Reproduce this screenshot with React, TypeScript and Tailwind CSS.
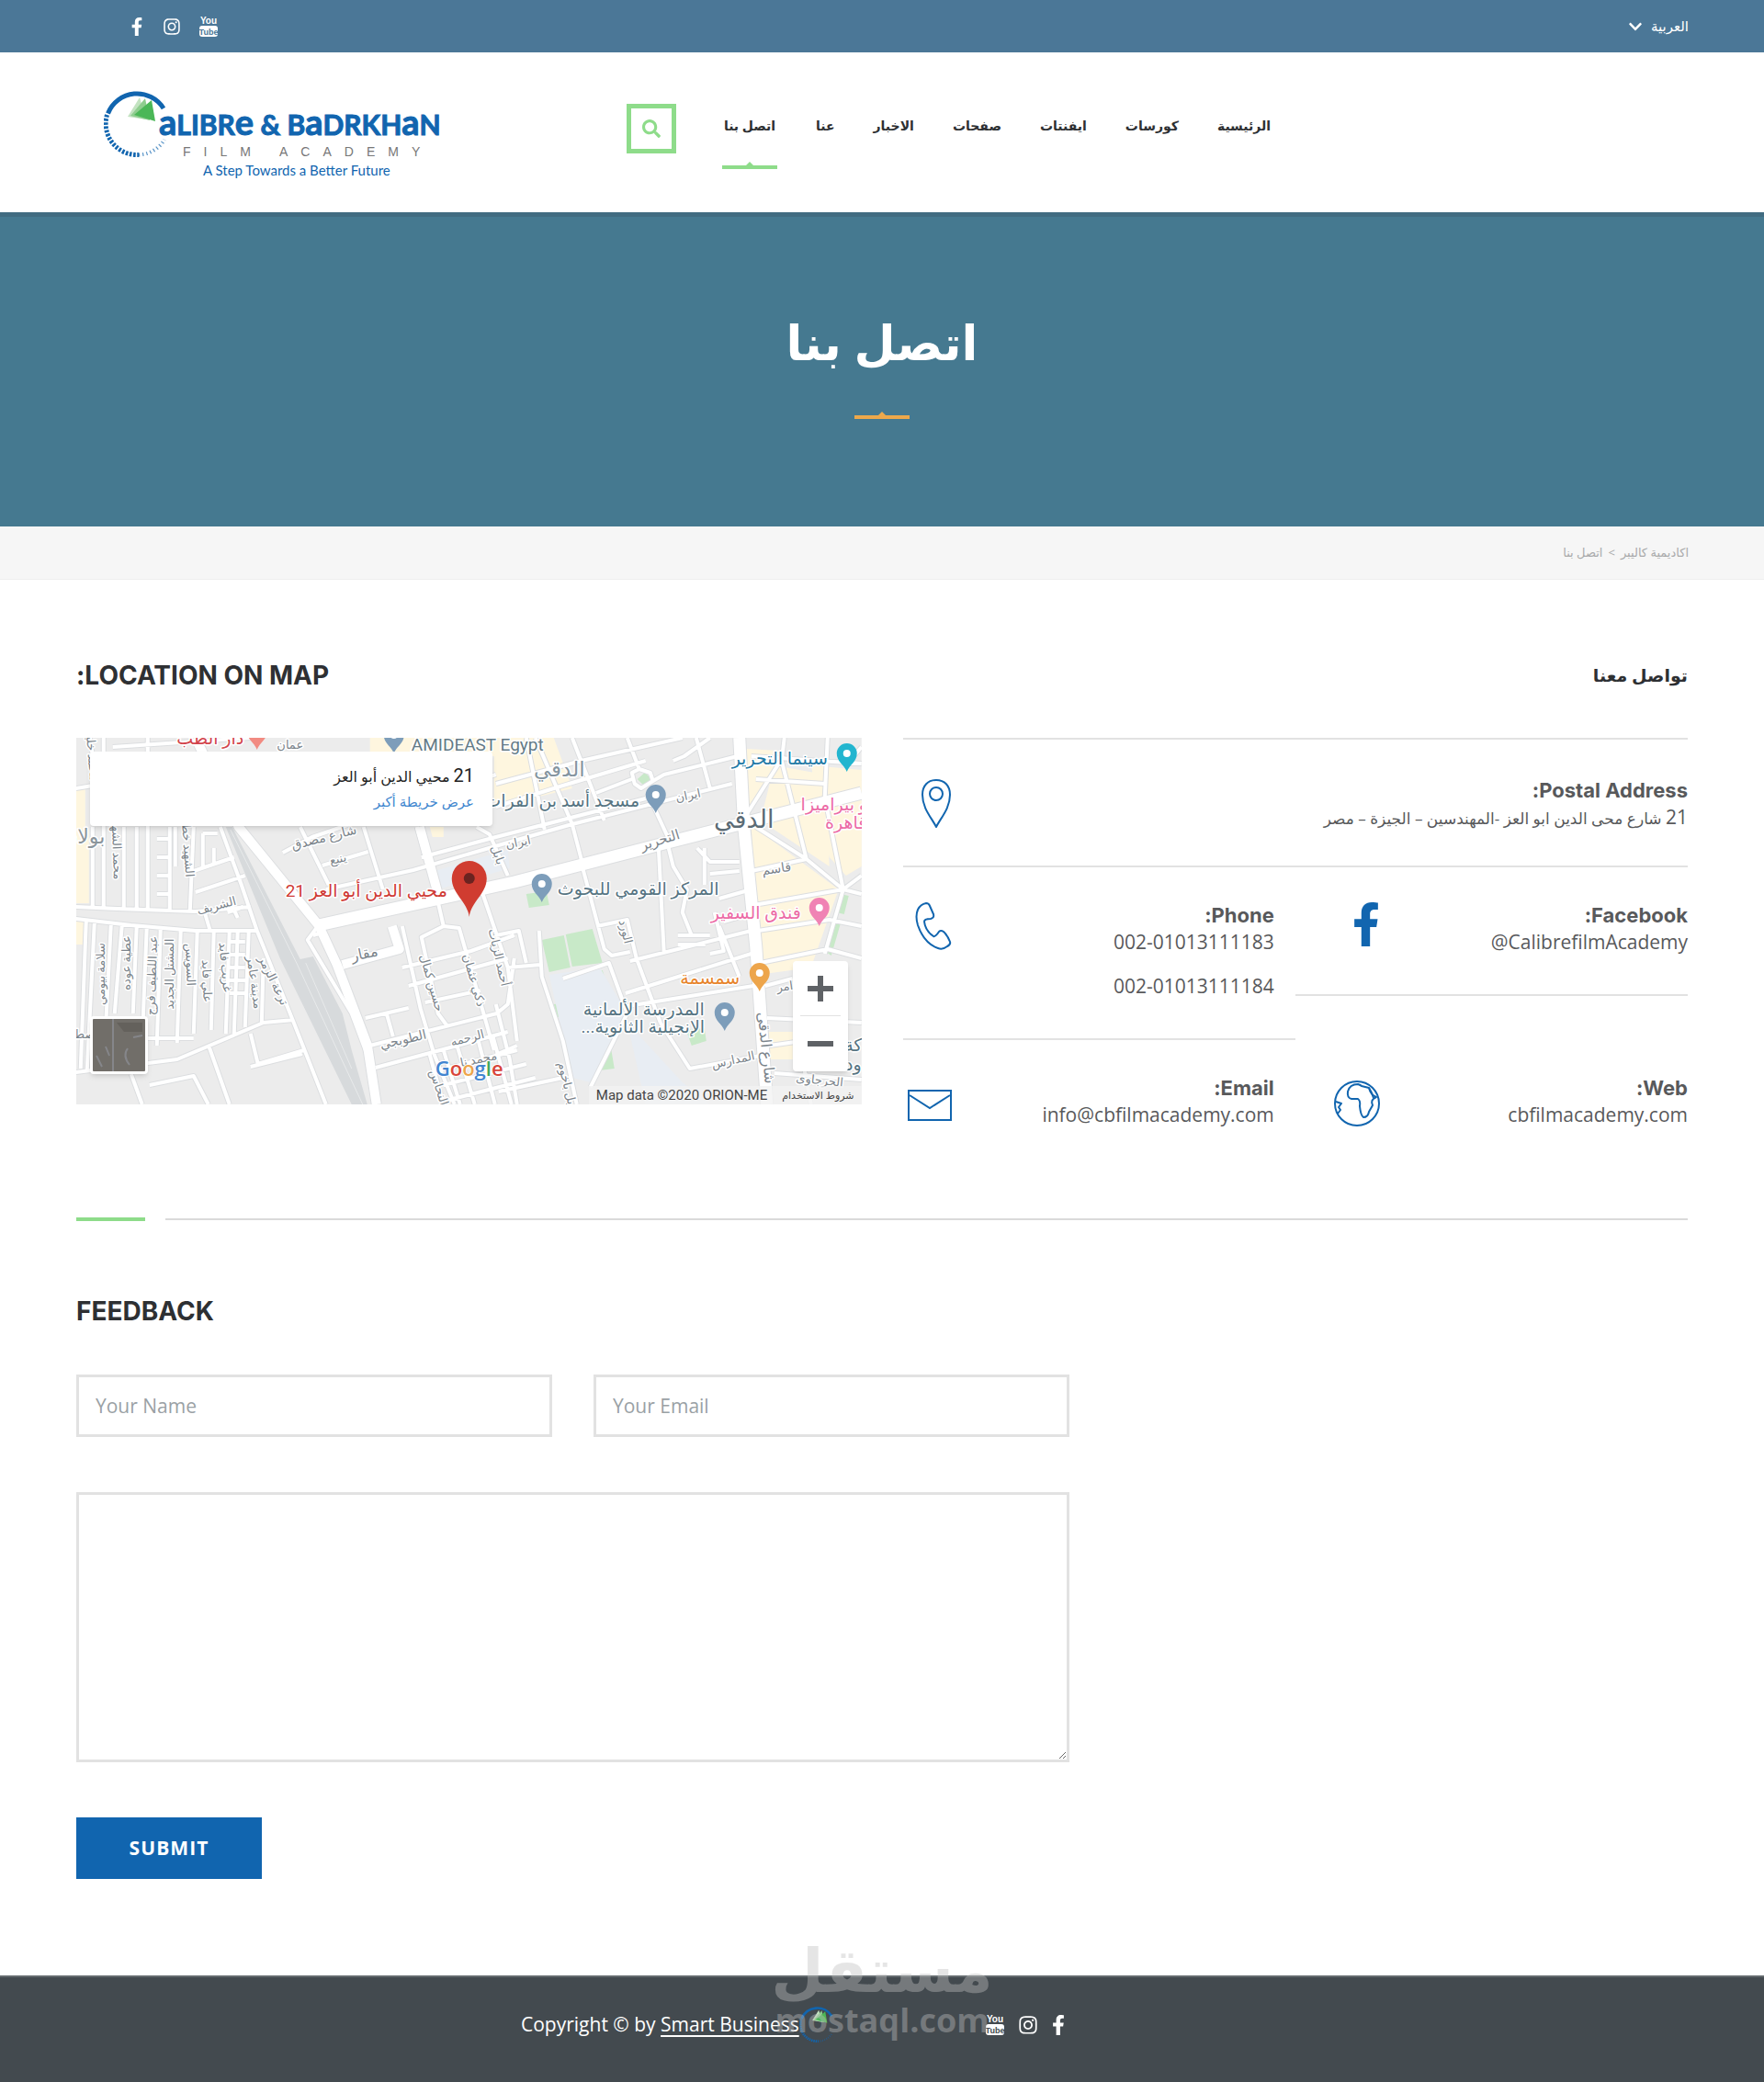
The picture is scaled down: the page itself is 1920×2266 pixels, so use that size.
import { useState } from 'react';
import type { ReactNode } from 'react';
import { FaChevronDown, FaFacebookF, FaInstagram, FaSearch } from 'react-icons/fa';

const NAV_ITEMS = ['اتصل بنا', 'عنا', 'الاخبار', 'صفحات', 'ايفنتات', 'كورسات', 'الرئيسية'];

const BLUE = '#1165af';

function YoutubeIcon({ cut }: { cut: string }) {
    return (
        <svg width="20" height="22" viewBox="0 0 20 22" aria-hidden="true" className="font-['Liberation_Sans_Narrow','Liberation_Sans',sans-serif] font-bold">
            <text x="10" y="8" fontSize="10" textAnchor="middle" fill="#fff">You</text>
            <rect x="0" y="10" width="20" height="12" rx="3" fill="#fff" />
            <text x="10" y="20" fontSize="9" textAnchor="middle" fill={cut}>Tube</text>
        </svg>
    );
}

function Aperture() {
    return (
        <g>
            <path d="M4.5 25.5 A34 34 0 0 1 65 20" fill="none" stroke={BLUE} strokeWidth="5" />
            <path d="M3.5 27 A34 34 0 0 0 38 70.5" fill="none" stroke={BLUE} strokeWidth="5" strokeDasharray="2.6 1.6" />
            <path d="M38 70.5 A34 34 0 0 0 66 54" fill="none" stroke={BLUE} strokeWidth="4" strokeDasharray="1.2 3" opacity="0.7" />
            <path d="M26 29 L39 8 L46 32 Z" fill="#c3e3c1" />
            <path d="M29 28 L45 9 L50 33 Z" fill="#8fcd8f" />
            <path d="M33 27 L52 11 L56 34 Z" fill="#4bb757" />
        </g>
    );
}

function Logo() {
    return (
        <svg width="366" height="98" viewBox="0 0 366 98" role="img" aria-label="Calibre & Badrkhan Film Academy">
            <Aperture />
            <g fill={BLUE} stroke={BLUE} className="font-['Lato',sans-serif] font-bold">
                <text x="60" y="49" fontSize="30">
                    <tspan fontSize="38">a</tspan>LIBR<tspan fontSize="38">e</tspan> &amp; B<tspan fontSize="38">a</tspan>DRKH<tspan fontSize="38">a</tspan>N
                </text>
            </g>
            <text x="86" y="72" fontSize="14" letterSpacing="14" fill="#777" className="font-['Liberation_Sans',sans-serif]">FILM ACADEMY</text>
            <text x="108" y="93" fontSize="15" fill={BLUE} className="font-['Lato',sans-serif]">A Step Towards a Better Future</text>
        </svg>
    );
}

function Ridge({ color, className }: { color: string; className: string }) {
    return (
        <svg viewBox="0 0 60 8" width="60" height="8" className={className} aria-hidden="true">
            <path d="M0 4 H26 L30 0 L34 4 H60 V8 H0 Z" fill={color} />
        </svg>
    );
}

function TopBar() {
    return (
        <div className="flex h-[57px] items-center justify-between bg-[#4b7797] pl-[141px] pr-[82px] text-white">
            <div className="flex items-center gap-5">
                <a href="#facebook" aria-label="Facebook"><FaFacebookF className="h-5 w-4" /></a>
                <a href="#instagram" aria-label="Instagram"><FaInstagram className="h-5 w-5" /></a>
                <a href="#youtube" aria-label="YouTube"><YoutubeIcon cut="#4b7797" /></a>
            </div>
            <button type="button" className="flex items-center gap-2 text-[15px]">
                <FaChevronDown className="h-4 w-[18px]" />
                <span dir="rtl">العربية</span>
            </button>
        </div>
    );
}

function Header() {
    return (
        <header className="flex h-[174px] items-start bg-white pl-[113px]">
            <a href="#home" className="mt-[41px]"><Logo /></a>
            <button type="button" aria-label="Search" className="ml-[203px] mt-14 flex h-[54px] w-[54px] items-center justify-center border-[5px] border-[#8edc8a] text-[#8edc8a]">
                <FaSearch className="h-5 w-5" />
            </button>
            <nav className="ml-[50px] mt-16 flex gap-[42px] text-[14px] font-bold leading-8 text-[#2e3033]">
                {NAV_ITEMS.map((item, i) => (
                    <a key={item} href={`#${item}`} dir="rtl" className="flex flex-col items-center whitespace-nowrap">
                        {item}
                        {i === 0 && <Ridge color="#8edc8a" className="mt-[23px]" />}
                    </a>
                ))}
            </nav>
        </header>
    );
}

type MapLabel = { t: string; x: number; y: number; r?: number; s?: number; c?: string };

const STREET_LABELS: MapLabel[] = [
    { t: 'عمان', x: 233, y: 12 },
    { t: 'محمد خليل', x: 13, y: 18, r: 85 },
    { t: 'محمد الشهيد', x: 40, y: 120, r: 88 },
    { t: 'الشهيد خطاب', x: 117, y: 115, r: 86 },
    { t: 'شارع مصدق', x: 271, y: 113, r: -14, s: 14 },
    { t: 'ينبع', x: 286, y: 136, r: -12 },
    { t: 'بابل', x: 455, y: 129, r: 70 },
    { t: 'الشريف', x: 154, y: 187, r: -15 },
    { t: 'مقار', x: 315, y: 240, r: -12, s: 16 },
    { t: 'سلامة بيومي', x: 31, y: 257, r: -90 },
    { t: 'عطية عوده', x: 59, y: 245, r: -90 },
    { t: 'عبد اللطيف فرج', x: 87, y: 259, r: -88 },
    { t: 'المشتل الجديد', x: 106, y: 257, r: -90 },
    { t: 'السويس', x: 120, y: 247, r: 88 },
    { t: 'علي فايد', x: 138, y: 265, r: 88 },
    { t: 'غريب فايد', x: 158, y: 250, r: 85 },
    { t: 'مدينة عامر', x: 190, y: 267, r: 82 },
    { t: 'ترعة الزمر', x: 211, y: 266, r: 64 },
    { t: 'حسين كمال', x: 383, y: 268, r: 74 },
    { t: 'ذكي عثمان', x: 429, y: 265, r: 74 },
    { t: 'أحمد الزيات', x: 456, y: 240, r: 77 },
    { t: 'الطوبجي', x: 357, y: 333, r: -13, s: 14 },
    { t: 'الرحمه', x: 427, y: 331, r: -14 },
    { t: 'محمد نا', x: 439, y: 354, r: -12 },
    { t: 'النحاس', x: 391, y: 382, r: 72 },
    { t: 'صط', x: 9, y: 327 },
    { t: 'ايران', x: 667, y: 67, r: -12 },
    { t: 'ايران', x: 482, y: 118, r: -12 },
    { t: 'التحرير', x: 637, y: 116, r: -17, s: 15 },
    { t: 'قاسم', x: 763, y: 147, r: -8, s: 14 },
    { t: 'الورد', x: 594, y: 212, r: 76 },
    { t: 'امر', x: 772, y: 275, r: -8 },
    { t: 'شارع الدقى', x: 746, y: 338, r: 84, s: 16 },
    { t: 'المدارس', x: 716, y: 355, r: -12 },
    { t: 'الحرجاوى', x: 809, y: 377, r: 6 },
    { t: 'بل باخوم', x: 530, y: 377, r: 76 },
];

const PLACE_LABELS: MapLabel[] = [
    { t: 'بولاق', x: 8, y: 115, s: 22, c: '#8b959c' },
    { t: 'دار الطب', x: 146, y: 7, c: '#d2444c' },
    { t: 'AMIDEAST Egypt', x: 437, y: 14, s: 19, c: '#637a86' },
    { t: 'الدقي', x: 526, y: 42, s: 23, c: '#8595a0' },
    { t: 'الدقي', x: 727, y: 98, s: 27, c: '#5b6b75' },
    { t: 'مسجد أسد بن الفرات', x: 529, y: 75, c: '#567482' },
    { t: 'المركز القومي للبحوث', x: 612, y: 171, c: '#567482' },
    { t: 'سينما التحرير', x: 766, y: 29, c: '#2279a5' },
    { t: 'نو بيراميزا', x: 828, y: 79, c: '#ec6ba6' },
    { t: 'قاهرة', x: 838, y: 99, c: '#ec6ba6' },
    { t: 'فندق السفير', x: 740, y: 197, c: '#ec6ba6' },
    { t: 'سمسمة', x: 690, y: 268, c: '#e7842b' },
    { t: 'المدرسة الألمانية', x: 618, y: 302, c: '#567482' },
    { t: 'الإنجيلية الثانوية...', x: 617, y: 321, c: '#567482' },
    { t: 'محيي الدين أبو العز 21', x: 316, y: 173, c: '#cf3a35' },
    { t: 'كة', x: 846, y: 341, c: '#567482' },
    { t: 'ود', x: 846, y: 362, c: '#567482' },
];

const PINS = [
    { x: 197, y: -6, c: '#f28b82' },
    { x: 346, y: -2, c: '#7d9dba' },
    { x: 631, y: 63, c: '#7d9dba' },
    { x: 507, y: 160, c: '#7d9dba' },
    { x: 706, y: 300, c: '#7d9dba' },
    { x: 839, y: 18, c: '#22b5cf' },
    { x: 809, y: 186, c: '#f083b4' },
    { x: 744, y: 257, c: '#eda54b' },
];

// minor streets as "d" strings, drawn once wide in grey and once in white
const SMALL_ROADS =
    'M0 184 L45 186 L130 189 L190 184 M0 197 L60 204 L130 210 L197 210 ' +
    'M18 97 L18 186 M30 0 V186 M52 97 V186 M66 97 V187 M78 0 V187 M102 97 V188 M128 97 L124 189 M108 97 V140 ' +
    'M88 110 H100 M88 130 H100 M88 150 H100 M88 170 H100 M128 145 L172 130 M130 168 L184 150 M138 104 H154 M138 104 V140 M150 120 V140 ' +
    'M11 200 L5 360 M20 202 L12 362 M38 204 L30 360 M50 204 L42 300 M66 205 L62 300 M77 206 L72 330 M92 207 L88 335 M114 209 L110 332 M132 210 L128 322 M150 210 L147 318 M167 210 L163 322 M176 210 L172 322 M188 210 L184 315 M204 240 L202 312 ' +
    'M167 222 H184 M167 236 H184 M167 250 H184 M167 264 H184 M167 278 H184 M70 327 H128 ' +
    'M0 364 L110 350 L204 310 L237 307 M144 334 L167 399 M60 366 L72 399 M80 378 L128 368 L144 399 M190 322 L198 355 L248 340 M190 358 L246 344 ' +
    'M15 0 L30 94 M40 10 L190 0 M0 55 L18 52 ' +
    'M157 97 L180 160 L197 210 L237 310 L272 399 M140 190 L146 210 M165 190 L182 184 M168 178 L176 196 ' +
    'M225 125 L257 108 L457 40 M244 97 L275 160 M272 165 L367 144 L477 112 L540 94 L714 50 M313 97 L334 165 M268 139 L318 124 ' +
    'M371 97 L392 170 L400 205 M376 130 L457 108 L620 66 M436 97 L450 105 L470 150 ' +
    'M400 205 L376 217 L394 300 L405 315 M400 205 L417 207 L455 340 M355 250 L430 232 L477 215 M362 270 L470 240 M355 205 L375 295 L390 345 L412 399 ' +
    'M264 204 L252 220 L300 300 L315 340 M258 215 L268 212 M320 335 L458 300 L470 290 L477 240 M315 305 L362 294 M338 300 L345 325 M380 288 L440 275 ' +
    'M326 359 L470 320 M385 345 L400 399 M400 340 L418 399 M415 336 L434 399 M395 362 L480 340 M400 378 L490 355 M406 394 L500 370 M438 330 L456 399 M454 326 L474 399 ' +
    'M441 165 L470 250 L480 330 M470 250 L505 247 M457 215 L482 210 L490 245 M504 210 L507 260 L530 330 L545 399 M457 290 L472 350 L480 399 M457 345 L480 335 M460 385 L530 370 ' +
    'M551 140 L575 230 L583 237 L603 233 M567 205 L600 198 L610 240 L636 310 M603 243 L735 210 M530 262 L580 245 L600 300 L560 380 M598 278 L735 235 M600 292 L750 268 M636 310 L668 360 L750 345 ' +
    'M634 118 L640 235 M645 120 L650 140 L665 165 L660 190 L670 215 M676 120 L690 135 H722 M684 120 L684 160 M690 148 L722 145 M700 175 L735 165 M705 200 L740 190 M655 215 H690 M655 225 H685 M690 235 L705 232 L695 190 M700 205 L722 260 ' +
    'M650 25 L662 20 L690 0 M605 38 L613 34 L625 38 L628 47 L615 55 L608 50 Z M600 0 L613 34 M628 47 L640 40 L720 20 M566 60 L605 45 M675 0 L690 55 M457 50 L550 25 L660 0 M457 75 L520 55 L620 25 M500 0 L540 94 L552 140 M540 0 L575 90 M490 0 L510 100 M622 60 L645 110 ' +
    'M727 88 L770 20 M740 97 L795 132 L835 165 L855 150 M735 20 L855 28 M740 45 L815 50 M771 0 L768 25 L795 132 M818 0 L815 65 L835 165 M735 145 L795 132 M738 182 L835 165 L855 170 M742 210 L820 198 L855 205 M745 245 L818 230 L855 240 M835 165 L815 235 M855 10 L838 30 M750 270 L780 262 M752 305 L855 310 M755 335 L790 330 M760 365 L855 372 M785 320 L800 399';

const ROADS = 'M130 0 L177 97 L264 204 L284 247 L317 334 L327 399 M344 205 L352 230 L290 247 M374 97 L394 170';
const MAIN_ROADS = 'M264 204 L477 157 L644 114 L855 60 M722 0 L727 97 L740 227 L752 399';

function MapDrawing() {
    return (
        <svg viewBox="0 0 855 399" preserveAspectRatio="xMidYMid slice" className="block h-full w-full" aria-hidden="true">
            <rect width="855" height="399" fill="#ececec" />
            <g fill="#fef6df">
                <path d="M0 55 H10 V100 H14 V180 H0 Z M0 195 L10 198 L8 225 H0 Z" />
                <path d="M320 0 H480 L520 0 L540 55 L500 65 L490 75 L455 70 V20 L320 20 Z M385 97 H400 V108 H388 Z" />
                <path d="M730 12 L765 14 L768 30 L730 80 Z M735 95 L830 165 L800 250 L742 258 Z M800 30 L855 35 V140 L838 150 L820 130 Z M760 30 L815 40 L820 140 L790 120 L745 90 Z M740 320 H780 V350 H742 Z" />
            </g>
            <g fill="#c8e9c8">
                <path d="M507 220 L531 215 L538 250 L515 255 Z M533 214 L562 208 L573 245 L540 249 Z" />
                <path d="M619 38 L627 45 L619 53 L611 45 Z M490 170 L512 167 L515 182 L493 185 Z" />
                <path d="M832 170 L841 172 L836 192 L828 190 Z M826 198 L833 199 L822 237 L815 232 Z" />
                <path d="M545 262 L573 253 L580 275 L550 280 Z M520 290 L534 288 L536 302 L524 304 Z M563 340 L582 336 L586 360 L570 362 Z M536 355 L548 352 L555 370 L540 368 Z M618 365 L632 361 L634 370 L620 374 Z M664 318 L684 316 L686 330 L670 335 Z" />
            </g>
            <path d="M390 145 L470 122 L472 142 L394 165 Z M515 258 L570 250 L600 300 L560 375 L540 370 Z M600 310 L660 375 L690 399 H620 Z" fill="#e8edf3" />
            <path d="M163 97 L170 97 L244 241 L258 238 L290 300 L300 340 L317 399 H300 L222 240 Z" fill="#d7dadc" />
            <path d="M168 100 L240 245 L312 399 M250 245 L300 360" stroke="#e8eaeb" fill="none" />
            <g fill="none" strokeLinejoin="round">
                <path d={SMALL_ROADS} stroke="#dcdee0" strokeWidth="6" />
                <path d={ROADS} stroke="#dcdee0" strokeWidth="12" />
                <path d={MAIN_ROADS} stroke="#dcdee0" strokeWidth="15" />
                <path d={SMALL_ROADS} stroke="#fff" strokeWidth="4" />
                <path d={ROADS} stroke="#fff" strokeWidth="10" />
                <path d={MAIN_ROADS} stroke="#fff" strokeWidth="13" />
            </g>
            <g className="font-['Roboto','DejaVu_Sans',sans-serif]" textAnchor="middle" stroke="#fff" strokeWidth="3" strokeLinejoin="round" paintOrder="stroke">
                {[...STREET_LABELS, ...PLACE_LABELS].map((l, i) => (
                    <text
                        key={i}
                        x={l.x}
                        y={l.y}
                        direction="rtl"
                        fontSize={l.s ?? (i < STREET_LABELS.length ? 13 : 19)}
                        fill={l.c ?? '#7b848b'}
                        transform={`rotate(${l.r ?? 0} ${l.x} ${l.y})`}
                    >
                        {l.t}
                    </text>
                ))}
            </g>
            {PINS.map((p) => (
                <g key={`${p.x}-${p.y}`} transform={`translate(${p.x} ${p.y})`}>
                    <path d="M0 19 C-3 11 -11 8 -11 -1 A11 11 0 0 1 11 -1 C11 8 3 11 0 19 Z" fill={p.c} />
                    <circle cy="-1" r="4" fill="#fff" />
                </g>
            ))}
            <path d="M428 195 C426 178 409 170 409 153 A19 19 0 0 1 447 153 C447 170 430 178 428 195 Z" fill="#d03c30" />
            <circle cx="428" cy="153" r="6" fill="#6b2320" />
            <text x="391" y="368" fontSize="22" stroke="#fff" strokeWidth="2" paintOrder="stroke" className="font-['Open_Sans',sans-serif] font-semibold">
                <tspan fill="#4285d0">G</tspan><tspan fill="#d8453a">o</tspan><tspan fill="#eda54b">o</tspan><tspan fill="#4285d0">g</tspan><tspan fill="#43a85a">l</tspan><tspan fill="#d8453a">e</tspan>
            </text>
        </svg>
    );
}

function LocationMap() {
    return (
        <div className="relative h-[399px] overflow-hidden">
            <MapDrawing />
            <div dir="rtl" className="absolute left-[15px] top-[15px] h-[81px] w-[438px] rounded-sm bg-white px-5 pt-3 shadow-md">
                <p className="font-['Roboto','DejaVu_Sans',sans-serif] text-base leading-[26px] text-[#222]">
                    <span className="text-xl">21</span> محيي الدين أبو العز
                </p>
                <a href="#map" className="block text-[15px] leading-[26px] text-[#3f87cf]">عرض خريطة أكبر</a>
            </div>
            <button type="button" aria-label="Satellite" className="absolute left-[15px] top-[303px] h-[63px] w-[63px] rounded-sm border-[3px] border-white bg-[#716e69] shadow-md">
                <svg viewBox="0 0 57 57" className="h-full w-full" aria-hidden="true">
                    <path d="M22 0 V57 M4 40 L10 52 M14 30 L18 40 M38 32 Q32 40 40 50 M44 20 L54 18" stroke="#85868a" fill="none" strokeWidth="2" />
                    <path d="M26 4 H54 V14 H34 Z" fill="#64615c" />
                </svg>
            </button>
            <div className="absolute left-[780px] top-[243px] flex w-[60px] flex-col rounded-sm bg-white px-2 text-[#5f6266] shadow-md">
                <button type="button" aria-label="Zoom in" className="flex h-[60px] items-center justify-center border-b border-[#e2e2e2]">
                    <svg width="28" height="28" aria-hidden="true"><path d="M14 0 V28 M0 14 H28" stroke="currentColor" strokeWidth="6" /></svg>
                </button>
                <button type="button" aria-label="Zoom out" className="flex h-[60px] items-center justify-center">
                    <svg width="28" height="28" aria-hidden="true"><path d="M0 14 H28" stroke="currentColor" strokeWidth="6" /></svg>
                </button>
            </div>
            <div className="absolute bottom-0 right-0 flex h-5 items-center gap-4 bg-[#f2f2f2]/80 px-2 text-[#444]">
                <span className="font-['Roboto',sans-serif] text-[15px]">Map data ©2020 ORION-ME</span>
                <a href="#terms" dir="rtl" className="text-[11px]">شروط الاستخدام</a>
            </div>
        </div>
    );
}

function PinIcon() {
    return (
        <svg width="34" height="54" viewBox="0 0 34 54" fill="none" stroke={BLUE} strokeWidth="2" aria-hidden="true">
            <path d="M17 52 C12 42 2 32 2 17 C2 7 8 1 17 1 C26 1 32 7 32 17 C32 32 22 42 17 52 Z" strokeLinejoin="round" />
            <circle cx="17" cy="16" r="7" />
        </svg>
    );
}

function PhoneIcon() {
    return (
        <svg width="40" height="52" viewBox="0 0 40 52" fill="none" stroke={BLUE} strokeWidth="2" strokeLinejoin="round" aria-hidden="true">
            <path d="M3 8 Q6 2 12 1 Q15 1 16 4 L20 13 Q21 17 17 18 Q10 18 10 21 Q11 31 20 37 Q22 38 26 32 Q28 30 31 32 Q36 37 38 43 Q39 46 35 48 Q30 52 25 50 Q10 45 3 25 Q0 15 3 8 Z" />
        </svg>
    );
}

function MailIcon() {
    return (
        <svg width="48" height="34" viewBox="0 0 48 34" fill="none" stroke={BLUE} strokeWidth="2" aria-hidden="true">
            <rect x="1" y="1" width="46" height="32" />
            <path d="M2 6 L24 20 L46 6" />
        </svg>
    );
}

function GlobeIcon() {
    return (
        <svg width="50" height="50" viewBox="0 0 50 50" fill="none" stroke={BLUE} strokeWidth="2" strokeLinejoin="round" aria-hidden="true">
            <circle cx="25" cy="25" r="24" />
            <path d="M26 4 Q17 4 15 12 Q14 19 19 20 L26 20 Q29 22 28 28 Q29 38 32 40 Q37 40 38 34 L42 27 Q39 21 46 18 Q40 16 38 8 L30 6 Q29 5 26 4 Z" />
            <path d="M2 23 L8 25 L5 29 L7 32 L4 36 M38 8 Q41 12 43 19" />
        </svg>
    );
}

interface ContactCellProps {
    label: string;
    icon: ReactNode;
    className: string;
    children: ReactNode;
}

function ContactCell({ label, icon, className, children }: ContactCellProps) {
    return (
        <div className={`flex items-start justify-between ${className}`}>
            <div className="flex w-[53px] justify-end">{icon}</div>
            <div className="text-right leading-[29px]">
                <h3 dir="rtl" className="font-['Inter',sans-serif] text-[22px] font-bold leading-[29px]">{label}</h3>
                {children}
            </div>
        </div>
    );
}

function ContactInfo() {
    return (
        <div className="grid grid-cols-2 items-start border-t-2 border-[#e2e2e2] text-[21px] text-[#58595b]">
            <ContactCell label="Postal Address:" icon={<div className="pt-0.5"><PinIcon /></div>} className="col-span-2 border-b-2 border-[#e2e2e2] pb-[37px] pt-[41px]">
                <p dir="rtl" className="text-[17px] leading-[29px]"><span className="text-[21px]">21</span> شارع محى الدين ابو العز -المهندسين – الجيزة – مصر</p>
            </ContactCell>
            <ContactCell label="Phone:" icon={<PhoneIcon />} className="border-b-2 border-[#e2e2e2] pb-[42px] pr-[23px] pt-[38px]">
                <p>002-01013111183</p>
                <p className="mt-[19px]">002-01013111184</p>
            </ContactCell>
            <ContactCell label="Facebook:" icon={<FaFacebookF className="h-12 w-[30px] text-[#1165af]" />} className="border-b-2 border-[#e2e2e2] pb-[42px] pl-[39px] pt-[38px]">
                <p>@CalibrefilmAcademy</p>
            </ContactCell>
            <ContactCell label="Email:" icon={<div className="pt-4"><MailIcon /></div>} className="pb-[42px] pr-[23px] pt-[38px]">
                <p>info@cbfilmacademy.com</p>
            </ContactCell>
            <ContactCell label="Web:" icon={<div className="pt-1.5"><GlobeIcon /></div>} className="pb-[42px] pl-[39px] pt-[38px]">
                <p>cbfilmacademy.com</p>
            </ContactCell>
        </div>
    );
}

function FeedbackForm() {
    const [name, setName] = useState('');
    const [email, setEmail] = useState('');
    const [message, setMessage] = useState('');

    const field = 'border-[3px] border-[#e2e2e2] bg-white px-[18px] text-[#58595b] outline-none placeholder:text-[#9aa1a5]';

    return (
        <form className="flex w-[1081px] max-w-full flex-col items-start gap-[60px] text-[21px]" onSubmit={(e) => e.preventDefault()}>
            <div className="grid w-full grid-cols-2 gap-[45px]">
                <input aria-label="Your Name" placeholder="Your Name" value={name} onChange={(e) => setName(e.target.value)} className={`h-[68px] ${field}`} />
                <input aria-label="Your Email" type="email" placeholder="Your Email" value={email} onChange={(e) => setEmail(e.target.value)} className={`h-[68px] ${field}`} />
            </div>
            <textarea aria-label="Message" value={message} onChange={(e) => setMessage(e.target.value)} className={`block h-[294px] w-full resize ${field}`} />
            <button type="submit" className="h-[67px] w-[202px] bg-[#1165af] font-bold tracking-wider text-white">SUBMIT</button>
        </form>
    );
}

function Footer() {
    return (
        <footer className="relative flex h-[117px] items-center gap-[165px] border-t-2 border-[#646b6f] bg-[#434a4f] pb-3 pl-[567px] text-white">
            <div className="flex items-center text-[21px]">
                <p>Copyright © by <a href="#smart" className="underline underline-offset-4">Smart Business</a></p>
                <svg width="38" height="42" viewBox="0 0 70 76" aria-hidden="true"><Aperture /></svg>
            </div>
            <div className="flex items-center gap-[15px]">
                <a href="#youtube" aria-label="YouTube"><YoutubeIcon cut="#434a4f" /></a>
                <a href="#instagram" aria-label="Instagram"><FaInstagram className="h-[22px] w-[22px]" /></a>
                <a href="#facebook" aria-label="Facebook"><FaFacebookF className="h-[22px] w-3.5" /></a>
            </div>
            <div className="pointer-events-none absolute left-1/2 top-[-47px] flex w-[230px] -translate-x-1/2 flex-col items-center text-[#c0c0c0] opacity-40">
                <span dir="rtl" className="text-[66px] font-bold leading-[74px]">مستقل</span>
                <span className="font-['Open_Sans',sans-serif] text-[36px] font-bold leading-10">mostaql.com</span>
            </div>
        </footer>
    );
}

export default function App() {
    return (
        <div className="min-h-screen bg-white font-['Open_Sans','DejaVu_Sans',sans-serif]">
            <TopBar />
            <Header />
            <section className="flex h-[342px] flex-col items-center border-t-[5px] border-[#416c81] bg-[#457990] pt-24">
                <h1 dir="rtl" className="text-[52px] font-bold leading-[80px] text-white">اتصل بنا</h1>
                <Ridge color="#eda84b" className="mt-9" />
            </section>
            <div dir="rtl" className="flex h-[58px] items-center gap-1.5 border-b border-[#eeeeee] bg-[#f6f6f6] px-[82px] text-[13px] text-[#a9aaab]">
                <a href="#home">اكاديمية كاليبر</a>
                <span>&gt;</span>
                <span>اتصل بنا</span>
            </div>

            <main className="px-[83px] pb-[105px] pt-[86px]">
                <div className="grid grid-cols-2 gap-[45px]">
                    <section>
                        <h2 dir="rtl" className="mb-[50px] text-left font-['Inter',sans-serif] text-[28px] font-bold leading-9 text-[#2e3033]">LOCATION ON MAP:</h2>
                        <LocationMap />
                    </section>
                    <section>
                        <h2 dir="rtl" className="mb-[50px] text-[19px] font-bold leading-9 text-[#2e3033]">تواصل معنا</h2>
                        <ContactInfo />
                    </section>
                </div>

                <div className="mt-[55px] flex items-center gap-[22px]">
                    <div className="h-1 w-[75px] bg-[#8edc8a]" />
                    <div className="h-0.5 flex-1 bg-[#dadada]" />
                </div>

                <h2 className="mb-[51px] mt-20 font-['Inter',sans-serif] text-[28px] font-bold leading-9 text-[#2e3033]">FEEDBACK</h2>
                <FeedbackForm />
            </main>
            <Footer />
        </div>
    );
}
